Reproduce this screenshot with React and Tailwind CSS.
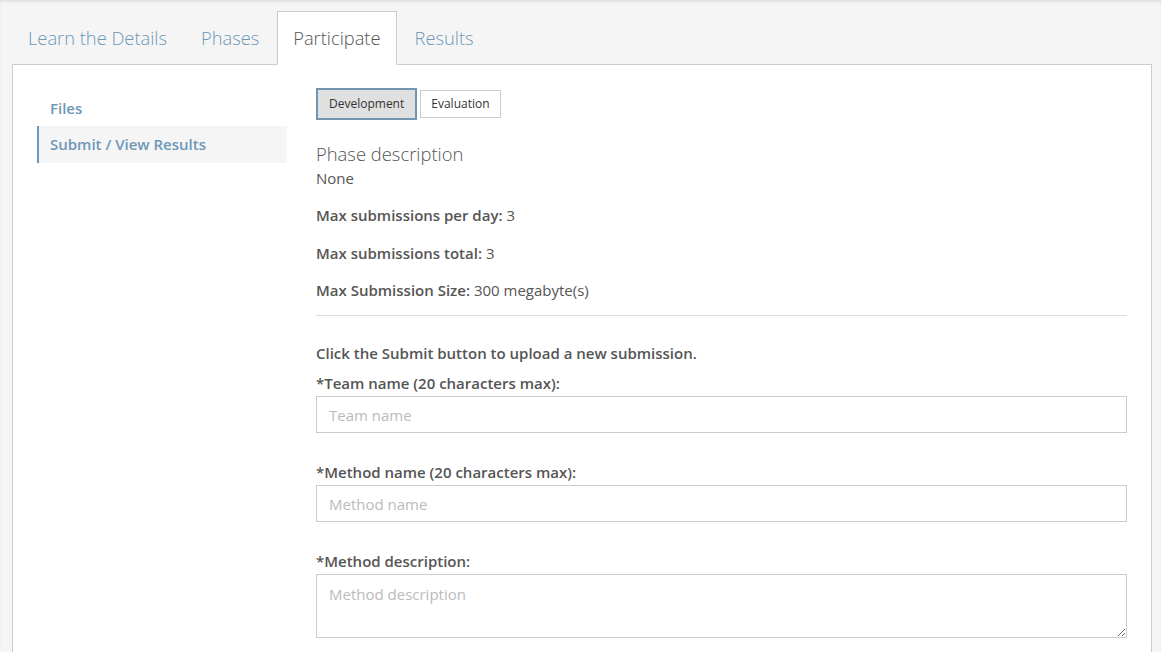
import React from "react";

const font = { fontFamily: '"Open Sans", "Liberation Sans", sans-serif' };

const tabs = ["Learn the Details", "Phases", "Participate", "Results"];

const Field = ({ label, placeholder, area }) => (
  <div className="mb-[29px]">
    <label className="block font-semibold text-[15px] leading-[20px] mb-[3px] text-[#555]">{label}</label>
    {area ? (
      <textarea
        placeholder={placeholder}
        className="block w-full h-[64px] border border-[#ccc] px-[12px] py-[8px] text-[15px] text-[#555] placeholder-[#bbb] outline-none resize-y"
      />
    ) : (
      <input
        placeholder={placeholder}
        className="block w-full h-[37px] border border-[#ccc] px-[12px] text-[15px] text-[#555] placeholder-[#bbb] outline-none"
      />
    )}
  </div>
);

export default function App() {
  return (
    <div className="min-h-[652px] bg-[#f5f5f5] shadow-[inset_0_3px_4px_-2px_rgba(0,0,0,0.12)] pt-[11px] pl-[12px] pr-[9px] text-[#555]" style={font}>
      <ul className="flex">
        {tabs.map((t) => (
          <li
            key={t}
            className={`mr-[2px] px-[15px] h-[54px] -mb-px flex items-center text-[18.3px] font-light border ${
              t === "Participate"
                ? "bg-white border-[#ccc] border-b-white text-[#555]"
                : "border-transparent text-[#6d98b9]"
            }`}
          >
            {t}
          </li>
        ))}
      </ul>
      <div className="bg-white border border-[#ccc] border-b-0 h-[600px] flex pl-[24px] pr-[24px] pt-[23px]">
        <div className="w-[250px] shrink-0 pt-[10px]">
          <div className="pl-[13px] h-[20px] flex items-center text-[15px] font-semibold text-[#6d98b9]">Files</div>
          <div className="mt-[8px] h-[37px] flex items-center pl-[11px] border-l-2 border-[#6d98b9] bg-[#f5f5f5] text-[15px] font-semibold text-[#6d98b9]">
            Submit / View Results
          </div>
        </div>
        <div className="flex-1 ml-[29px]">
          <div className="flex items-center gap-[3px]">
            <button className="h-[32px] px-[11px] bg-[#e0e0e0] border-2 border-[#7296b1] text-[12px] text-[#333]">Development</button>
            <button className="h-[28px] px-[10px] bg-white border border-[#ccc] text-[12px] text-[#333]">Evaluation</button>
          </div>
          <div className="mt-[21px] text-[18.4px] font-light leading-[26px]">Phase description</div>
          <div className="text-[15px] leading-[20px] mt-[1px]">None</div>
          <div className="mt-[17px] text-[15px] leading-[20px]"><b className="font-semibold">Max submissions per day:</b> 3</div>
          <div className="mt-[18px] text-[15px] leading-[20px]"><b className="font-semibold">Max submissions total:</b> 3</div>
          <div className="mt-[17px] text-[15px] leading-[20px]"><b className="font-semibold">Max Submission Size:</b> 300 megabyte(s)</div>
          <hr className="mt-[15px] border-[#ddd]" />
          <div className="mt-[27px] text-[15px] leading-[20px] font-semibold">Click the Submit button to upload a new submission.</div>
          <div className="mt-[10px]">
            <Field label="*Team name (20 characters max):" placeholder="Team name" />
            <Field label="*Method name (20 characters max):" placeholder="Method name" />
            <Field label="*Method description:" placeholder="Method description" area />
          </div>
        </div>
      </div>
    </div>
  );
}
